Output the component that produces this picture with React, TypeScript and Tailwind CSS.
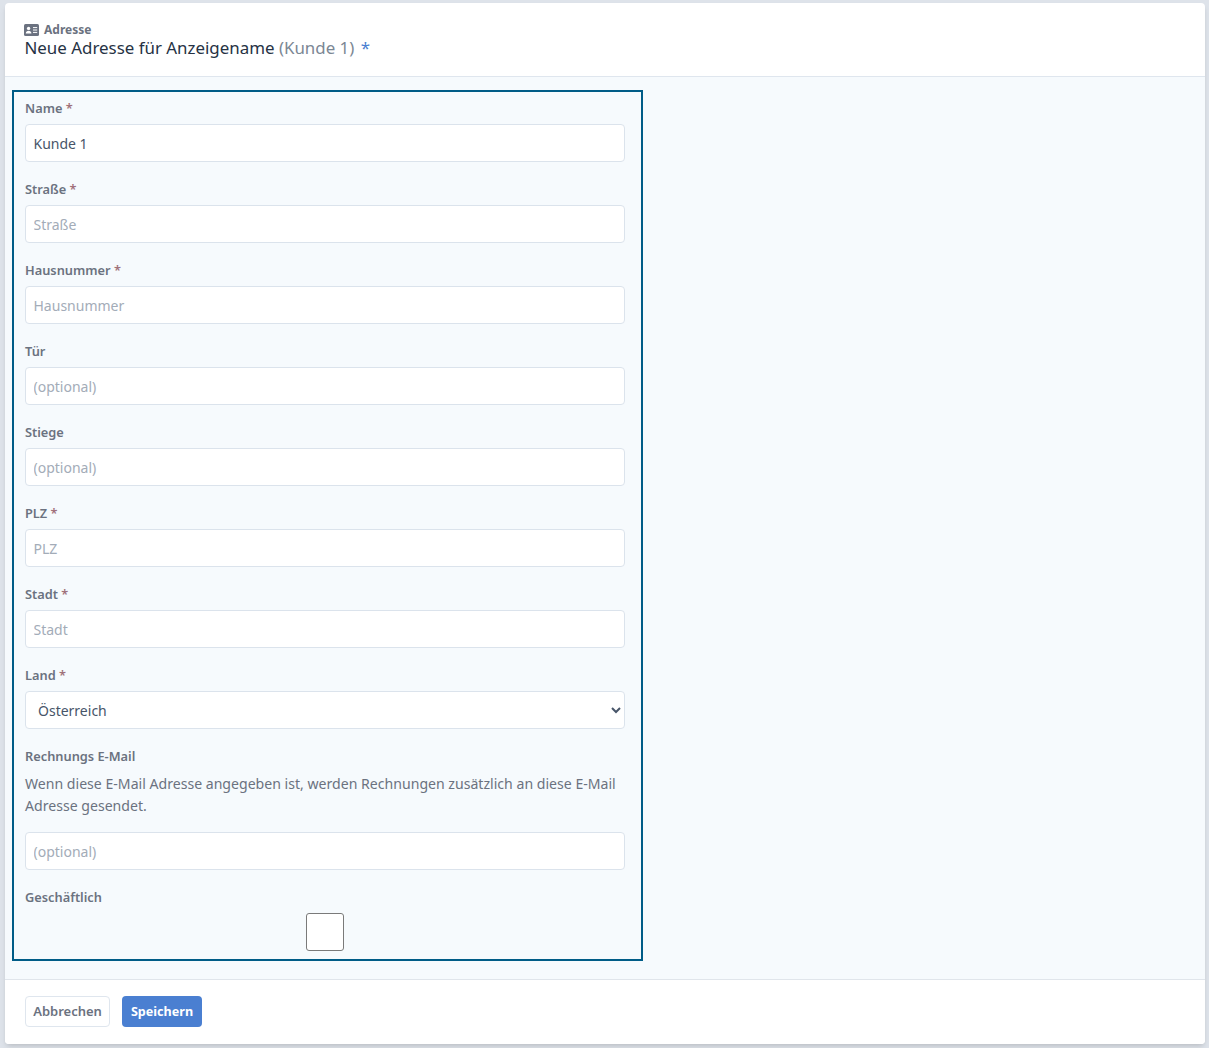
import React from 'react';

const font = "font-['Noto_Sans',sans-serif]";

const Label: React.FC<{ text: string; required?: boolean }> = ({ text, required }) => (
  <label className="block h-[22px] mb-[5px] text-[12.8px] leading-[22px] font-semibold text-[#6b7280]">
    {text}
    {required && <span className="text-[#a0717a]"> *</span>}
  </label>
);

const Field: React.FC<{ label: string; required?: boolean; placeholder?: string; value?: string }> = ({
  label,
  required,
  placeholder,
  value,
}) => (
  <div className="mb-4">
    <Label text={label} required={required} />
    <input
      type="text"
      defaultValue={value}
      placeholder={placeholder}
      className="block w-full h-[38px] px-[7.5px] bg-white border border-[#dbe3ec] rounded text-[14px] text-[#475569] placeholder:text-[#a3acb8] outline-none"
    />
  </div>
);

const App: React.FC = () => {
  return (
    <div className={`${font} h-screen w-full overflow-hidden bg-[#dee3ea] pt-[3px] pl-[5px] pr-1 pb-1`}>
      <div className="h-full flex flex-col bg-white rounded shadow-md">
        {/* Header */}
        <div className="h-[74px] shrink-0 border-b border-[#dfe6ee] pl-5 pr-5 pt-5">
          <div className="flex items-center h-[14px] -ml-px text-[12px] font-bold text-[#6b7280]">
            <svg className="w-[15px] h-[12px] mr-[5px]" viewBox="0 0 15 12">
              <rect width="15" height="12" rx="1.5" fill="#6b7280" />
              <circle cx="4.6" cy="4.4" r="1.7" fill="#fff" />
              <path d="M1.8 9.4c0-1.7 1.3-2.6 2.8-2.6s2.8.9 2.8 2.6z" fill="#fff" />
              <path d="M9 3.6h4.2M9 6h4.2M9 8.4h4.2" stroke="#fff" strokeWidth="1" />
            </svg>
            Adresse
          </div>
          <div className="text-[16.9px] leading-[22px] -ml-[0.5px] text-[#263244]">
            Neue Adresse für Anzeigename <span className="text-[#7b8794]">(Kunde 1)</span>{' '}
            <span className="ml-[2px] text-[#4a7fd1]">*</span>
          </div>
        </div>

        {/* Body */}
        <div className="flex-1 bg-[#f6fafd] px-[7px] pt-[13px]">
          <form className="w-[631px] border-2 border-[#005c87] pl-[11px] pr-4 pt-[5px] pb-2">
            <Field label="Name" required value="Kunde 1" />
            <Field label="Straße" required placeholder="Straße" />
            <Field label="Hausnummer" required placeholder="Hausnummer" />
            <Field label="Tür" placeholder="(optional)" />
            <Field label="Stiege" placeholder="(optional)" />
            <Field label="PLZ" required placeholder="PLZ" />
            <Field label="Stadt" required placeholder="Stadt" />

            <div className="mb-4">
              <Label text="Land" required />
              <select className="block w-full h-[38px] px-2 bg-white border border-[#dbe3ec] rounded text-[14px] text-[#475569] outline-none">
                <option>Österreich</option>
              </select>
            </div>

            <div className="mb-4">
              <Label text="Rechnungs E-Mail" />
              <p className="mt-[6px] mb-[15px] text-[14.1px] leading-[22px] text-[#6b7280]">
                Wenn diese E-Mail Adresse angegeben ist, werden Rechnungen zusätzlich an diese E-Mail Adresse gesendet.
              </p>
              <input
                type="text"
                placeholder="(optional)"
                className="block w-full h-[38px] px-[7.5px] bg-white border border-[#dbe3ec] rounded text-[14px] text-[#475569] placeholder:text-[#a3acb8] outline-none"
              />
            </div>

            <div>
              <Label text="Geschäftlich" />
              <input
                type="checkbox"
                className="block mx-auto w-[38px] h-[38px] appearance-none bg-white border border-[#7a7a7a] rounded-[3px]"
              />
            </div>
          </form>
        </div>

        {/* Footer */}
        <div className="h-[65px] shrink-0 bg-white border-t border-[#e0e5eb] rounded-b px-5 pt-4 flex items-start gap-3">
          <button type="button" className="w-[85px] h-[31px] bg-white border border-[#dfe6ee] rounded text-[13px] font-semibold text-[#6b7280]">
            Abbrechen
          </button>
          <button type="button" className="w-[80px] h-[31px] pt-px bg-[#4a7fd1] rounded text-[12.6px] font-bold text-white">
            Speichern
          </button>
        </div>
      </div>
    </div>
  );
};

export default App;
